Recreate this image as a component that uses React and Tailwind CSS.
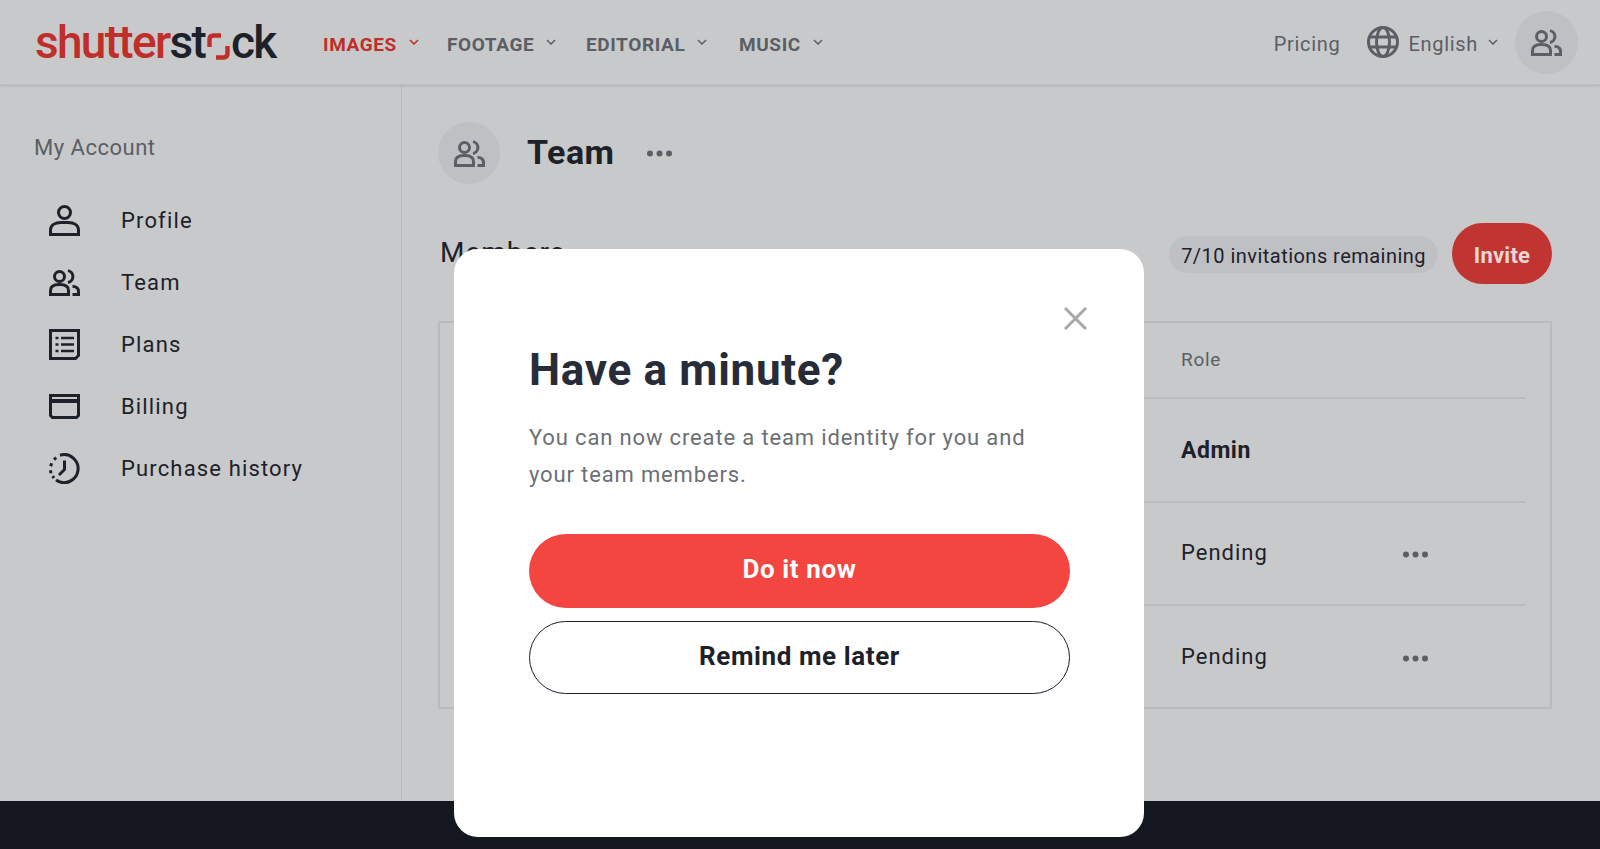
import React from 'react';

const TeamIcon = ({ className }) => (
    <svg viewBox="0 0 31 27" fill="none" stroke="currentColor" strokeWidth="3" className={className}>
        <circle cx="10.5" cy="7.5" r="5" />
        <path d="M1.5 25.5V21.5C1.5 17.5 5 15.5 10 15.5H11C16 15.5 19.5 17.5 19.5 21.5V25.5Z" />
        <path d="M19 1.6A6 6 0 0 1 19 13.4" />
        <path d="M23.5 17.2C27.5 17.5 29.5 19.5 29.5 22.5V25.5H23.5" />
    </svg>
);

const ProfileIcon = ({ className }) => (
    <svg viewBox="0 0 31 31" fill="none" stroke="currentColor" strokeWidth="3" className={className}>
        <circle cx="15.5" cy="7.5" r="6" />
        <path d="M1.5 29.5V25C1.5 20 6 17.5 12 17.5H19C25 17.5 29.5 20 29.5 25V29.5Z" />
    </svg>
);

const PlansIcon = ({ className }) => (
    <svg viewBox="0 0 31 31" fill="none" stroke="currentColor" strokeWidth="3" className={className}>
        <path d="M1.5 1.5H29.5V26.5L26.5 29.5H1.5Z" />
        <path d="M6.5 9H9.5M12 9H25M6.5 15.5H9.5M12 15.5H25M6.5 22H9.5M12 22H25" strokeWidth="2.6" />
    </svg>
);

const BillingIcon = ({ className }) => (
    <svg viewBox="0 0 31 25" fill="none" stroke="currentColor" strokeWidth="3" className={className}>
        <path d="M1.5 1.5H29.5V21.5L27.5 23.5H3.5L1.5 21.5Z" />
        <path d="M1.5 7H29.5" strokeWidth="4" />
    </svg>
);

const HistoryIcon = ({ className }) => (
    <svg viewBox="0 0 31 31" fill="none" stroke="currentColor" strokeWidth="3" className={className}>
        <path d="M11 2.2A14 14 0 1 1 7 27" />
        <path d="M7.2 4.6L5 6.6M2.6 10.2L1.7 13.2M1.4 17.2L2 20.2M3.6 23.2L5 25" />
        <path d="M15.5 7.5V16.5L10 22" />
    </svg>
);

const GlobeIcon = ({ className }) => (
    <svg viewBox="0 0 32 32" fill="none" stroke="currentColor" strokeWidth="3" className={className}>
        <circle cx="16" cy="16" r="14.5" />
        <ellipse cx="16" cy="16" rx="6.5" ry="14.5" />
        <path d="M2.5 11H29.5M2.5 21H29.5" />
    </svg>
);

const Chevron = ({ className }) => (
    <svg viewBox="0 0 10 6" fill="none" stroke="currentColor" strokeWidth="1.5" className={className}>
        <path d="M1 1L5 5L9 1" />
    </svg>
);

const Dots = ({ className }) => (
    <svg viewBox="0 0 25 7" fill="currentColor" className={className}>
        <circle cx="3" cy="3.5" r="3" />
        <circle cx="12.5" cy="3.5" r="3" />
        <circle cx="22" cy="3.5" r="3" />
    </svg>
);

const nav = [
    { label: 'IMAGES', color: 'text-[#bf2e28]', width: 'w-[124px]' },
    { label: 'FOOTAGE', color: 'text-[#5b5e64]', width: 'w-[139px]' },
    { label: 'EDITORIAL', color: 'text-[#5b5e64]', width: 'w-[153px]' },
    { label: 'MUSIC', color: 'text-[#5b5e64]', width: 'w-[100px]' },
];

const menu = [
    { label: 'Profile', Icon: ProfileIcon, size: 'h-[31px]' },
    { label: 'Team', Icon: TeamIcon, size: 'h-[27px]' },
    { label: 'Plans', Icon: PlansIcon, size: 'h-[31px]' },
    { label: 'Billing', Icon: BillingIcon, size: 'h-[25px]' },
    { label: 'Purchase history', Icon: HistoryIcon, size: 'h-[31px]' },
];

const Header = () => (
    <header className="h-[85px] shrink-0 flex items-center pl-[35px] pr-[22px] bg-[#c8c9cb] border-b border-[#bdbec0] shadow-[0_1px_3px_rgba(0,0,0,0.12)] relative">
        <div className="flex items-center w-[288px] text-[46px] font-medium leading-none tracking-[-1.7px]">
            <span className="text-[#bf2e28]">shutter</span>
            <span className="text-[#1d2129]">st</span>
            <svg viewBox="0 0 23 27" fill="none" stroke="#bf2e28" strokeWidth="4.4" className="w-[23px] h-[27px] mt-[9px] ml-[2px] mr-[1px] shrink-0">
                <path d="M2.5 14V6.5C2.5 3.8 3.8 2.5 6.5 2.5H14" />
                <path d="M20.5 13V20.5C20.5 23.2 19.2 24.5 16.5 24.5H9" />
            </svg>
            <span className="text-[#1d2129]">ck</span>
        </div>
        <nav className="flex items-center">
            {nav.map(item => (
                <div key={item.label} className={`flex items-center gap-[12px] ${item.width} ${item.color}`}>
                    <span className="text-[19px] font-bold tracking-[0.6px] pt-[6px]">{item.label}</span>
                    <Chevron className="w-[10px] h-[6px]" />
                </div>
            ))}
        </nav>
        <div className="ml-auto flex items-center text-[#5b5e64]">
            <span className="text-[20px] tracking-[0.7px] mr-[27px] pt-[3px]">Pricing</span>
            <GlobeIcon className="w-[32px] h-[32px] mr-[9px]" />
            <span className="text-[20px] tracking-[0.7px] pt-[3px]">English</span>
            <Chevron className="w-[10px] h-[6px] ml-[10px] mr-[17px]" />
            <div className="w-[63px] h-[63px] rounded-full bg-[#bfc0c3] flex items-center justify-center">
                <TeamIcon className="h-[27px]" />
            </div>
        </div>
    </header>
);

const Sidebar = () => (
    <aside className="w-[402px] shrink-0 border-r border-[#b9babd] pl-[34px] pt-[49px]">
        <div className="text-[22px] leading-[28px] tracking-[0.5px] text-[#5b5e64]">My Account</div>
        <ul className="mt-[27px]">
            {menu.map(({ label, Icon, size }) => (
                <li key={label} className="h-[62px] flex items-center text-[#1d2129]">
                    <span className="w-[31px] ml-[15px] flex justify-center">
                        <Icon className={size} />
                    </span>
                    <span className="ml-[41px] text-[22px] tracking-[1.15px]">{label}</span>
                </li>
            ))}
        </ul>
    </aside>
);

const Row = ({ role, bold, dots }) => (
    <div className="h-[103.5px] border-b-2 border-[#bbbcbe] last:border-b-0 flex items-center justify-end text-[#1d2129]">
        <div className="w-[345px] flex items-center">
            <span className={bold ? 'w-[222px] text-[23px] font-bold tracking-[0.5px] pt-[2px]' : 'w-[222px] text-[22px] tracking-[1px] pb-[2px]'}>{role}</span>
            {dots && <Dots className="w-[25px] h-[7px] mt-[2px] text-[#5b5e64]" />}
        </div>
    </div>
);

const Content = () => (
    <main className="flex-1 pl-[36px] pr-[48px] pt-[37px]">
        <div className="flex items-center">
            <div className="w-[62px] h-[62px] rounded-full bg-[#bfc0c3] flex items-center justify-center text-[#5b5e64]">
                <TeamIcon className="h-[27px]" />
            </div>
            <h1 className="ml-[27px] text-[34px] font-bold tracking-[0.5px] text-[#1d2129] pb-[2px]">Team</h1>
            <Dots className="ml-[32px] w-[25px] h-[7px] text-[#5b5e64]" />
        </div>
        <div className="mt-[39px] flex items-center">
            <span className="ml-[2px] text-[28px] tracking-[1px] text-[#1d2129] pb-[2px]">Members</span>
            <span className="ml-auto mt-[2px] h-[37px] px-[12px] pt-[2px] rounded-full bg-[#bfc0c3] flex items-center text-[20px] tracking-[0.47px] text-[#1d2129]">7/10 invitations remaining</span>
            <button className="ml-[14px] w-[100px] h-[61px] pt-[3px] rounded-full bg-[#c03532] text-[22px] font-bold tracking-[0.2px] text-[#e8d5d4]">Invite</button>
        </div>
        <div className="mt-[37px] border-2 border-[#b9babd] pl-[24px] pr-[24px] h-[388px]">
            <div className="h-[76px] border-b-2 border-[#bbbcbe] flex items-center justify-end">
                <span className="w-[345px] text-[19px] tracking-[0.7px] text-[#5b5e64]">Role</span>
            </div>
            <Row role="Admin" bold />
            <Row role="Pending" dots />
            <Row role="Pending" dots />
        </div>
    </main>
);

const Modal = () => (
    <div className="absolute left-[454px] top-[249px] w-[690px] h-[588px] bg-white rounded-[24px] pl-[75px] pr-[74px] pt-[92px]">
        <svg viewBox="0 0 24 24" fill="none" stroke="#a5a7aa" strokeWidth="3" className="absolute right-[57px] top-[58px] w-[23px] h-[23px]">
            <path d="M1 1L23 23M23 1L1 23" />
        </svg>
        <h2 className="text-[44px] leading-[58px] font-bold tracking-[0.7px] text-[#262c38]">Have a minute?</h2>
        <p className="mt-[20px] text-[22px] leading-[37px] tracking-[0.85px] text-[#6b6f76]">
            You can now create a team identity for you and<br />your team members.
        </p>
        <button className="mt-[41px] block w-full h-[74px] pb-[3px] rounded-full bg-[#f44640] text-white text-[26px] font-bold tracking-[0.6px]">Do it now</button>
        <button className="mt-[13px] block w-full h-[73px] pb-[2px] rounded-full bg-white border border-[#1a1f2e] text-[#1d2129] text-[26px] font-bold tracking-[0.6px]">Remind me later</button>
    </div>
);

export default function App() {
    return (
        <div className="relative h-[849px] overflow-hidden flex flex-col bg-[#c8c9cb] font-['Roboto',sans-serif]">
            <Header />
            <div className="flex flex-1 min-h-0">
                <Sidebar />
                <Content />
            </div>
            <footer className="h-[48px] shrink-0 bg-[#14171f]" />
            <Modal />
        </div>
    );
}
